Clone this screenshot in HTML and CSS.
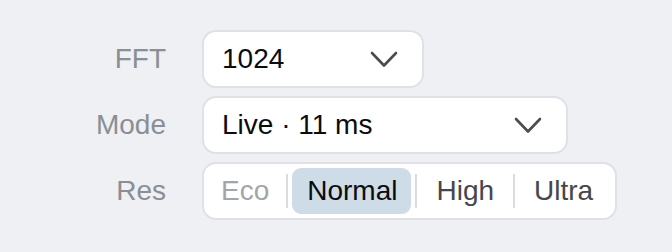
FILE: index.html
```html
<!DOCTYPE html>
<html lang="en">

<head>
    <meta charset="UTF-8">
    <meta name="viewport" content="width=device-width, initial-scale=1.0">
    <title>Analyzer settings</title>
    <link rel="stylesheet" href="styles.css">
</head>

<body>
    <div class="form">
        <div class="label">FFT</div>
        <div class="field">
            <div class="select fft">
                <span>1024</span>
                <svg class="chevron" width="28" height="17" viewBox="0 0 28 17">
                    <path d="M2 2 L14 14.5 L26 2" />
                </svg>
            </div>
        </div>

        <div class="label">Mode</div>
        <div class="field">
            <div class="select mode">
                <span>Live · 11 ms</span>
                <svg class="chevron" width="28" height="17" viewBox="0 0 28 17">
                    <path d="M2 2 L14 14.5 L26 2" />
                </svg>
            </div>
        </div>

        <div class="label">Res</div>
        <div class="field">
            <div class="segmented">
                <div class="seg disabled">Eco</div>
                <div class="sep"></div>
                <div class="seg active">Normal</div>
                <div class="sep"></div>
                <div class="seg">High</div>
                <div class="sep"></div>
                <div class="seg">Ultra</div>
            </div>
        </div>
    </div>
</body>

</html>
```

FILE: styles.css
```css
body {
    margin: 0;
    padding-top: 30px;
    background-color: #eef0f3;
    font-family: "Liberation Sans", Arial, sans-serif;
    font-size: 28px;
    color: #0b0c0e;
}

.form {
    display: grid;
    grid-template-columns: 166px auto;
    column-gap: 36px;
    row-gap: 8px;
    align-items: center;
}

.label {
    text-align: right;
    color: #8a8e95;
}

.field {
    display: flex;
}

.select {
    box-sizing: border-box;
    height: 58px;
    display: flex;
    align-items: center;
    justify-content: space-between;
    padding: 0 24px 0 18px;
    background-color: #ffffff;
    border: 2px solid #dfe1e6;
    border-radius: 14px;
}

.fft {
    width: 222px;
}

.mode {
    width: 366px;
}

.chevron path {
    fill: none;
    stroke: #4a4c52;
    stroke-width: 2.6;
    stroke-linecap: round;
    stroke-linejoin: round;
}

.segmented {
    box-sizing: border-box;
    width: 415px;
    height: 58px;
    display: flex;
    align-items: center;
    padding: 4px;
    background-color: #ffffff;
    border: 2px solid #dfe1e6;
    border-radius: 14px;
}

.seg {
    height: 100%;
    display: flex;
    align-items: center;
    justify-content: center;
    padding: 0 15px;
    border-radius: 9px;
    color: #45474c;
}

.seg.disabled {
    color: #a4a5a8;
    padding: 0 13px;
}

.seg.active {
    background-color: #cddce6;
    color: #0b0c0e;
    padding: 0 14px 0 15px;
}

.sep {
    flex: none;
    width: 2px;
    height: 34px;
    margin: 0 4px;
    background-color: #d9dbe0;
}
```
